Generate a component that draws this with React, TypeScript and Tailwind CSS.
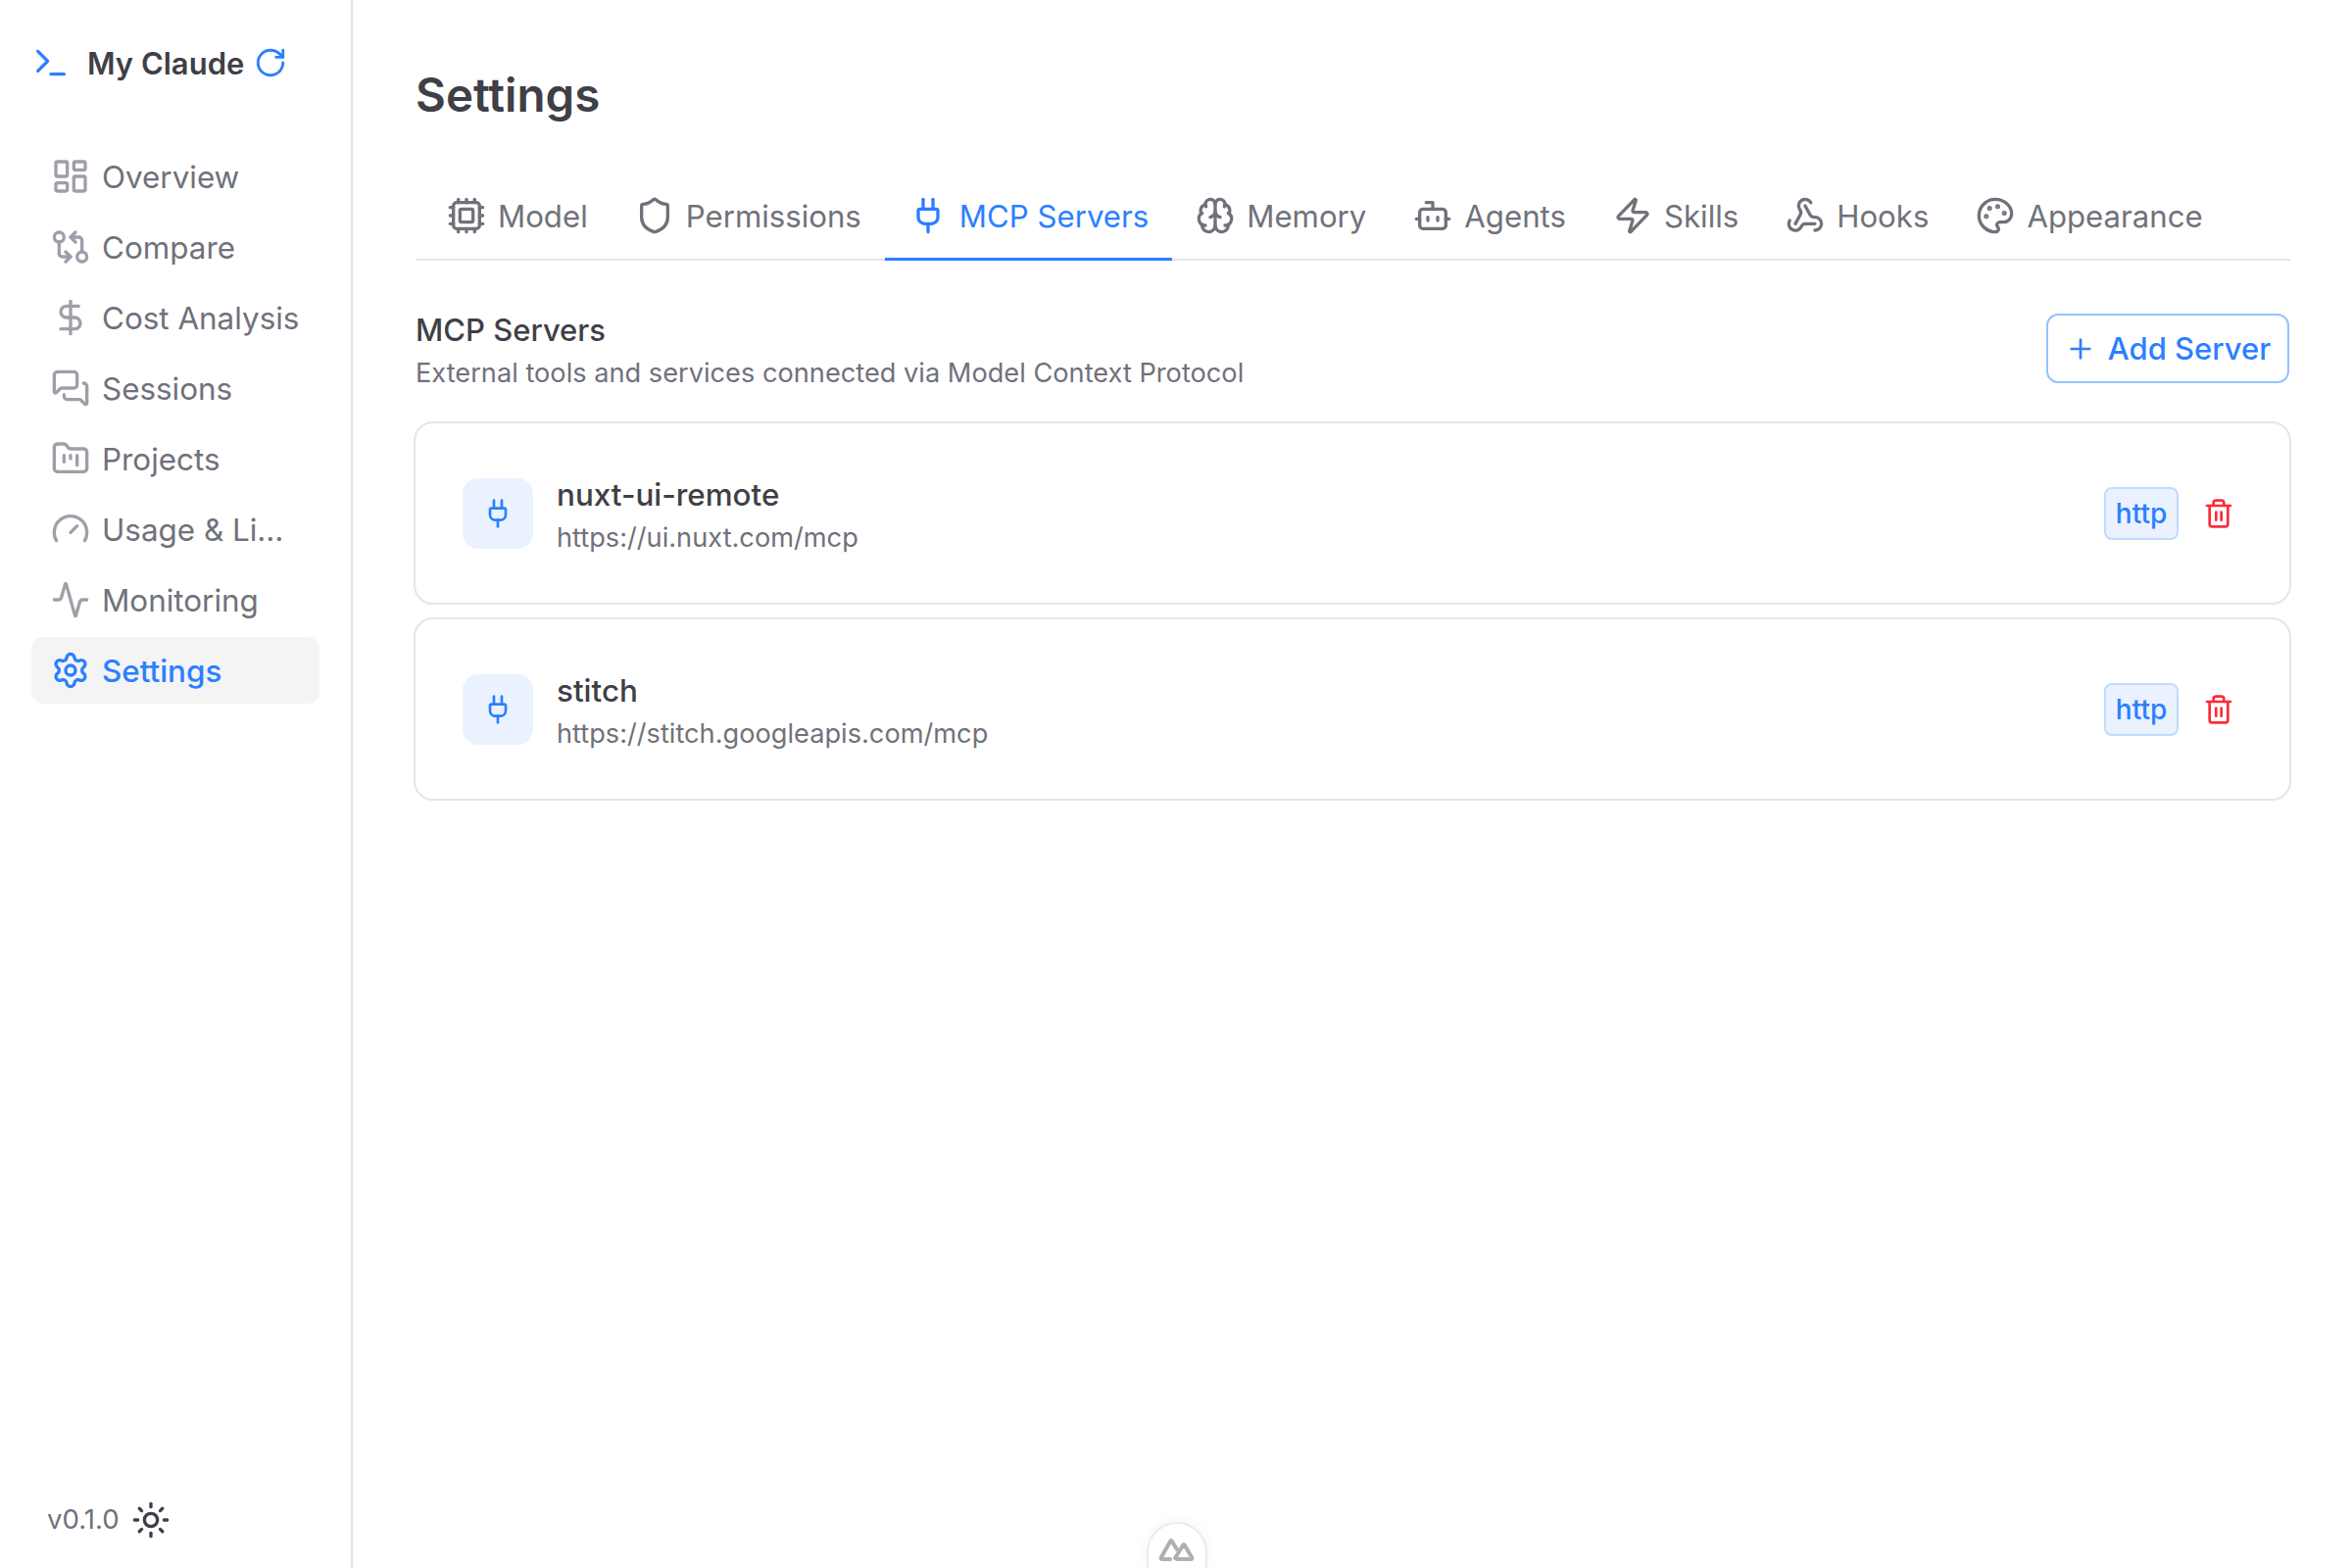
import React from "react";
import {
  Activity, Bot, Brain, Cpu, DollarSign, FolderKanban, Gauge, GitCompareArrows, LayoutDashboard,
  MessagesSquare, Palette, Plug, Plus, RotateCw, Settings, Shield, Sun, Terminal, Trash2, Webhook, Zap,
} from "lucide-react";

const nav = [
  { label: "Overview", icon: LayoutDashboard },
  { label: "Compare", icon: GitCompareArrows },
  { label: "Cost Analysis", icon: DollarSign },
  { label: "Sessions", icon: MessagesSquare },
  { label: "Projects", icon: FolderKanban },
  { label: "Usage & Limits", icon: Gauge },
  { label: "Monitoring", icon: Activity },
  { label: "Settings", icon: Settings, active: true },
];

const tabs = [
  { label: "Model", icon: Cpu },
  { label: "Permissions", icon: Shield },
  { label: "MCP Servers", icon: Plug, active: true },
  { label: "Memory", icon: Brain },
  { label: "Agents", icon: Bot },
  { label: "Skills", icon: Zap },
  { label: "Hooks", icon: Webhook },
  { label: "Appearance", icon: Palette },
];

const servers = [
  { name: "nuxt-ui-remote", url: "https://ui.nuxt.com/mcp" },
  { name: "stitch", url: "https://stitch.googleapis.com/mcp" },
];

export default function App() {
  return (
    <div className="relative flex h-[1600px] w-[2400px] overflow-hidden bg-white font-['Inter',sans-serif] text-zinc-500">
      <aside className="flex w-[360px] shrink-0 flex-col border-r-2 border-[#e5e5e5]">
        <div className="flex h-[128px] items-center pl-[32px]">
          <Terminal size={40} className="text-blue-500" />
          <span className="ml-[17px] pt-[2px] text-[31px] font-semibold text-zinc-700">My Claude</span>
          <RotateCw size={34} className="ml-[10px] text-blue-500" />
        </div>
        <nav className="mt-[18px] flex flex-col gap-[4px] pl-[32px]">
          {nav.map((n) => (
            <div
              key={n.label}
              className={`flex h-[68px] w-[294px] items-center gap-[12px] rounded-[12px] pl-[20px] pr-[16px] text-[31.4px] ${
                n.active ? "bg-[#f4f4f5] font-medium text-blue-500" : "font-normal text-zinc-500"
              }`}
            >
              <n.icon size={40} className={`shrink-0 ${n.active ? "text-blue-500" : "text-zinc-400"}`} />
              <span className="truncate pt-[3px]">{n.label}</span>
            </div>
          ))}
        </nav>
        <div className="mt-auto flex h-[98px] items-center gap-[12px] pl-[48px] text-[27.6px]">
          <span>v0.1.0</span>
          <Sun size={40} className="text-zinc-700" />
        </div>
      </aside>

      <main className="flex-1 pl-[64px] pr-[63px] pt-[65px]">
        <h1 className="text-[47.5px] font-semibold leading-[64px] text-zinc-700">Settings</h1>
        <div className="mt-[44px] flex h-[93px] border-b-2 border-[#e5e5e5] pl-[8px]">
          {tabs.map((t) => (
            <div
              key={t.label}
              className={`-mb-[2px] flex h-[93px] items-center gap-[12px] border-b-[3px] px-[24px] pt-[3px] text-[31.2px] ${
                t.active ? "border-blue-500 text-blue-500" : "border-transparent text-zinc-500"
              }`}
            >
              <t.icon size={40} className="shrink-0" />
              <span className="pt-[3px]">{t.label}</span>
            </div>
          ))}
        </div>

        <div className="mt-[49px] flex items-start justify-between">
          <div>
            <div className="text-[31px] font-medium leading-[44px] text-zinc-700">MCP Servers</div>
            <div className="pt-[1px] text-[27.2px] leading-[42px] text-zinc-500">External tools and services connected via Model Context Protocol</div>
          </div>
          <button className="mr-[1px] mt-[5px] flex h-[71px] w-[248px] items-center justify-center gap-[12px] rounded-[12px] border-2 border-[#95c2ff] text-[31px] font-medium text-blue-500">
            <Plus size={32} />
            <span className="pt-[2px]">Add Server</span>
          </button>
        </div>

        <div className="-ml-[2px] -mr-[1px] mt-[28px] flex flex-col gap-[13px]">
          {servers.map((s) => (
            <div key={s.name} className="flex h-[187px] items-center rounded-[20px] border-2 border-[#e5e5e5] pl-[48px] pr-[48px]">
              <div className="flex h-[72px] w-[72px] items-center justify-center rounded-[16px] bg-[#eaf2ff]">
                <Plug size={32} className="text-blue-500" />
              </div>
              <div className="ml-[24px] flex-1 pt-[6px]">
                <div className="text-[31.4px] font-medium leading-[44px] text-zinc-700">{s.name}</div>
                <div className="text-[27.2px] leading-[44px] text-zinc-500">{s.url}</div>
              </div>
              <span className="flex h-[54px] w-[76px] items-center justify-center rounded-[8px] border-2 border-[#bfdbfe] bg-[#eaf2ff] text-[28px] font-medium text-blue-500">http</span>
              <button className="ml-[17px] flex h-[48px] w-[48px] items-center justify-center text-red-500">
                <Trash2 size={32} />
              </button>
            </div>
          ))}
        </div>
      </main>

      <div className="absolute bottom-0 left-[1170px] flex h-[47px] w-[62px] items-start justify-center rounded-t-[31px] border-2 border-b-0 border-[#ececec] bg-white pt-[14px] shadow-[0_0_16px_rgba(0,0,0,0.05)]">
        <svg width="38" height="24" viewBox="0 0 38 24" fill="none" stroke="#b0b0b0" strokeWidth="4" strokeLinejoin="round" strokeLinecap="round">
          <path d="M12 22H4q-2 0-1-2L12 4q1-2 2 0l5 8" />
          <path d="M19 22h14q2 0 1-2l-7-12q-1-2-2 0l-8 13" />
        </svg>
      </div>
    </div>
  );
}
